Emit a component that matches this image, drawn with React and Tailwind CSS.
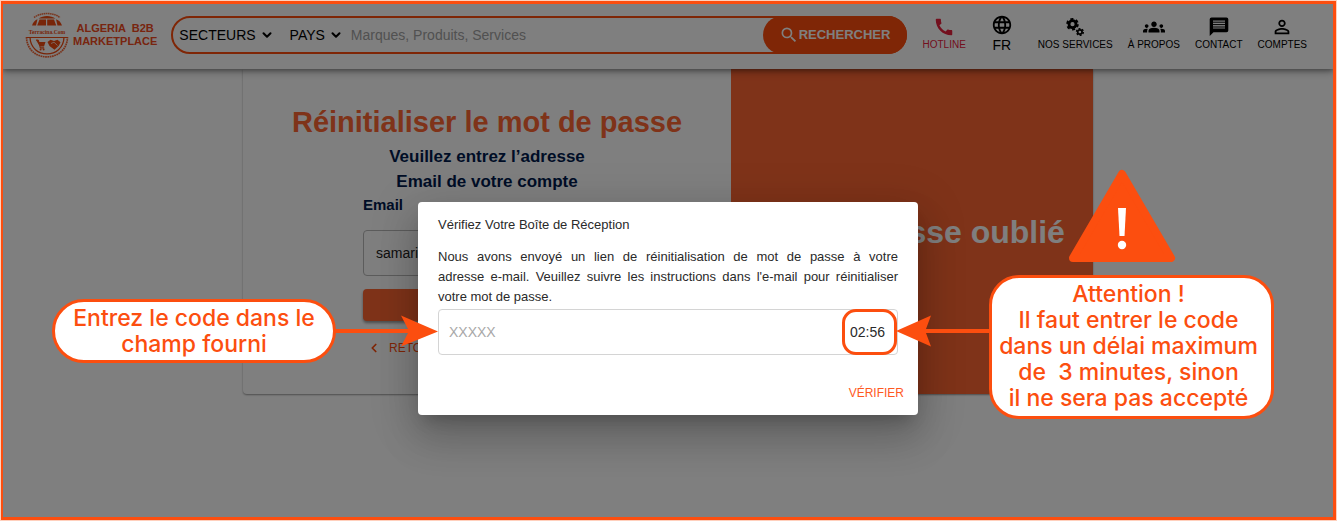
import React from "react";
import { ChevronDown, ChevronLeft } from "lucide-react";
import { MdCall, MdLanguage, MdGroups, MdPermIdentity, MdSearch } from "react-icons/md";

function Logo() {
  return (
    <svg viewBox="0 0 44 46" className="h-[46px] w-11 shrink-0 text-[#f04a10]" fill="currentColor" aria-hidden="true">
      <path d="M9 5.5C16 .2 28 .2 35 5.5" fill="none" stroke="currentColor" strokeWidth="1.6" strokeDasharray="1.6 .5" opacity=".8" />
      <path d="M7 13.6C8 10.2 10.2 7.800 12.500 7.200L11 13.600ZM12.200 13.600L14.500 7.500H21V13.600ZM22.200 13.600V7.500H29L31.200 13.600ZM32.500 13.600L31 7.200C34 8 36 10.500 37 13.600Z" />
      <path d="M13.500 6.600C18 3.200 26 3.200 30.500 6.600Z" />
      <text x="22" y="21.500" textAnchor="middle" fontFamily="Liberation Serif, serif" fontWeight="700" fontSize="5.600">Terracina.Com</text>
      <path d="M1.500 25.500H42.500" stroke="currentColor" strokeWidth="1.200" />
      <path d="M5 25C5.500 47.500 38.500 47.500 39 25" fill="none" stroke="currentColor" strokeWidth="1.300" />
      <path d="M1.500 25C2 51.500 42 51.500 42.500 25" fill="none" stroke="currentColor" strokeWidth="1.700" strokeDasharray="1.700 .6" opacity=".85" />
      <path d="M11 28H13.500L14.200 30H20.500L19 34.500H14.800ZM14.800 35.500H19V36.300H14.800Z" />
      <path d="M11 28H13.300L15.300 36H19.300" fill="none" stroke="currentColor" strokeWidth=".9" />
      <circle cx="15.600" cy="37.600" r="1" />
      <circle cx="18.600" cy="37.600" r="1" />
      <path d="M22.500 30L25.500 27.800L29 28.900L32.500 27.800L35.500 30.200L33.800 33.800L29.500 37.800L24.500 34Z" />
      <path d="M26 31.500L29 30.200L32.500 33.500" fill="none" stroke="white" strokeWidth=".7" />
    </svg>
  );
}

function GearsIcon({ className }) {
  return (
    <svg viewBox="0 0 22 22" className={className} fill="none" stroke="currentColor" aria-hidden="true">
      <circle cx="8.500" cy="8.200" r="3.500" strokeWidth="2.800" />
      <circle cx="8.500" cy="8.200" r="5.300" strokeWidth="2" strokeDasharray="3 2.550" />
      <circle cx="15.900" cy="16" r="2.200" strokeWidth="1.700" />
      <circle cx="15.900" cy="16" r="3.400" strokeWidth="1.400" strokeDasharray="1.900 1.660" />
    </svg>
  );
}

function MessageIcon({ className }) {
  return (
    <svg viewBox="0 0 22 22" className={className} aria-hidden="true">
      <path
        fillRule="evenodd"
        fill="currentColor"
        d="M3.500 1.500H18.500Q20.300 1.500 20.300 3.300V14.500Q20.300 16.300 18.500 16.300H5.500L1.700 20V3.300Q1.700 1.500 3.500 1.500ZM5 4.600V12.600H17V4.600Z"
      />
      <path d="M5 6.200H17M5 8.600H17M5 11H17" stroke="currentColor" strokeWidth="1" />
    </svg>
  );
}

function NavItem({ icon: Icon, label, className = "text-black" }) {
  return (
    <a href="#" className={`flex flex-col items-center whitespace-nowrap text-[10px] leading-[14px] ${className}`}>
      <Icon className="size-[22px]" />
      {label}
    </a>
  );
}

function Header() {
  return (
    <header className="relative flex h-[65px] items-center bg-white pr-[26px] pb-[3px] pl-[22px] shadow-[0_2px_4px_rgba(0,0,0,0.3),0_4px_8px_rgba(0,0,0,0.2)]">
      <a href="#" className="flex items-center gap-1">
        <Logo />
        <span className="text-center text-[11px] leading-[13px] font-bold whitespace-pre text-[#f04a20]">
          {"ALGERIA  B2B\nMARKETPLACE"}
        </span>
      </a>
      <form className="ml-3.5 flex h-[38px] min-w-0 flex-1 items-center rounded-full border-2 border-[#ff4c0c] pl-1.5" onSubmit={(e) => e.preventDefault()}>
        <button type="button" className="flex items-center gap-1 text-sm">
          SECTEURS
          <ChevronDown size={14} strokeWidth={3.5} />
        </button>
        <button type="button" className="ml-4 flex items-center gap-1 text-sm">
          PAYS
          <ChevronDown size={14} strokeWidth={3.5} />
        </button>
        <input
          aria-label="Recherche"
          placeholder="Marques, Produits, Services"
          className="ml-2 min-w-0 flex-1 text-sm outline-none placeholder:text-[#a2a2a2]"
        />
        <button className="-mr-0.5 flex h-[38px] w-36 items-center justify-center rounded-full bg-[#ff4c0c] text-[13px] font-bold text-white">
          <MdSearch className="size-5" />
          RECHERCHER
        </button>
      </form>
      <nav className="ml-4 flex items-center gap-[15px] pb-0.5">
        <NavItem icon={MdCall} label="HOTLINE" className="text-[#e6203c]" />
        <button type="button" className="flex flex-col items-center px-2.5 text-sm leading-[18px]">
          <MdLanguage className="size-[22px]" />
          FR
        </button>
        <NavItem icon={GearsIcon} label="NOS SERVICES" />
        <NavItem icon={MdGroups} label="À PROPOS" />
        <NavItem icon={MessageIcon} label="CONTACT" />
        <NavItem icon={MdPermIdentity} label="COMPTES" />
      </nav>
    </header>
  );
}

function ResetCard() {
  return (
    <main className="mx-auto grid w-full max-w-[850px] grid-cols-[488fr_362fr] overflow-hidden rounded-b bg-white shadow-[0_1px_2px_rgba(0,0,0,0.4)]">
      <section className="flex flex-col items-center pt-[35px] pb-9">
        <h1 className="text-[29px] leading-9 font-bold text-[#ff6633]">Réinitialiser le mot de passe</h1>
        <p className="mt-1 text-center text-[17px] leading-[25px] font-bold text-[#001a4d]">
          Veuillez entrez l’adresse
          <br />
          Email de votre compte
        </p>
        <form className="flex w-[248px] flex-col" onSubmit={(e) => e.preventDefault()}>
          <label htmlFor="email" className="text-[15px] leading-[22px] font-bold text-[#001a4d]">
            Email
          </label>
          <input
            id="email"
            type="email"
            defaultValue="samarin"
            className="mt-3.5 h-[46px] rounded border border-[#b8b8b8] px-3 text-sm text-[#222]"
          />
          <button
            aria-label="Envoyer"
            className="mt-[13px] h-8 rounded bg-[#ff6633] shadow-[0_2px_3px_rgba(0,0,0,0.4)]"
          />
          <a href="#" className="mt-[17px] flex items-center gap-2 pl-1 text-xs leading-5 text-[#ff4c0c]">
            <ChevronLeft size={14} strokeWidth={3} />
            RETOUR
          </a>
        </form>
      </section>
      <section className="flex items-center justify-center bg-[#ff6633]">
        <h2 className="text-[32px] font-bold whitespace-nowrap text-white">Mot de passe oublié</h2>
      </section>
    </main>
  );
}

function Callout({ className, children }) {
  return (
    <p
      className={`absolute border-[3px] border-[#fc4e0f] bg-white text-center font-[Inter,sans-serif] text-[23px] leading-[26px] font-medium whitespace-pre text-[#fc4e0f] ${className}`}
    >
      {children}
    </p>
  );
}

function Annotations() {
  return (
    <>
      <svg viewBox="0 0 104 32" className="absolute top-[113px] right-[480px] h-8 w-[104px]" fill="#fc4e0f" aria-hidden="true">
        <path d="M0 14H74L67 .5L104 16.500L67 31.500L74 18H0Z" />
      </svg>
      <Callout className="top-[97px] right-[582px] w-[284px] rounded-[32px] py-[3px]">
        {"Entrez le code dans le\nchamp fourni"}
      </Callout>
      <svg viewBox="0 0 95 32" className="absolute top-[113px] left-[478px] h-8 w-[95px]" fill="#fc4e0f" aria-hidden="true">
        <path d="M95 14H30L35 .5L0 16L35 31.500L30 18H95Z" />
      </svg>
      <svg viewBox="0 0 108 94" className="absolute -top-[33px] left-[650px] h-[94px] w-[108px]" aria-hidden="true">
        <path d="M54 5L103 89H5Z" fill="#fc4e0f" stroke="#fc4e0f" strokeWidth="8" strokeLinejoin="round" />
        <path d="M50 39H58L56.500 67H51.500Z" fill="white" />
        <circle cx="54" cy="76" r="4.200" fill="white" />
      </svg>
      <Callout className="top-[73px] left-[571px] w-[285px] rounded-[30px] pt-[3px] pr-1.5 pb-[5px]">
        {"Attention !\nIl faut entrer le code\ndans un délai maximum\nde  3 minutes, sinon\nil ne sera pas accepté"}
      </Callout>
    </>
  );
}

function VerifyDialog() {
  return (
    <div className="absolute inset-0 flex items-start justify-center bg-black/50 pt-[198px]">
      <div className="relative">
        <div
          role="dialog"
          aria-labelledby="verify-title"
          className="flex w-[500px] flex-col rounded bg-white px-5 pt-3 pb-2.5 text-[13px] text-[#2a2a2a] shadow-[0_11px_15px_-7px_rgba(0,0,0,0.2),0_24px_38px_3px_rgba(0,0,0,0.14),0_9px_46px_8px_rgba(0,0,0,0.12)]"
        >
          <h2 id="verify-title" className="leading-[21px]">
            Vérifiez Votre Boîte de Réception
          </h2>
          <p className="mt-3 leading-5">
            <span className="block text-justify [text-align-last:justify]">
              Nous avons envoyé un lien de réinitialisation de mot de passe à votre
            </span>
            <span className="block text-justify [text-align-last:justify]">
              adresse e-mail. Veuillez suivre les instructions dans l'e-mail pour réinitialiser
            </span>
            <span className="block">votre mot de passe.</span>
          </p>
          <div className="mt-0.5 flex h-[46px] items-center rounded-sm border border-[#d4d4d4] pl-2.5">
            <input
              aria-label="Code de vérification"
              placeholder="XXXXX"
              className="min-w-0 flex-1 text-sm outline-none placeholder:text-[#a8a8a8]"
            />
            <time className="flex h-[46px] w-[55px] items-center justify-center rounded-[14px] border-[3px] border-[#fc4e0f] pr-1 text-sm">
              02:56
            </time>
          </div>
          <button className="mt-[26px] -mr-1.5 self-end text-xs leading-6 text-[#ff5a1f]">VÉRIFIER</button>
        </div>
        <Annotations />
      </div>
    </div>
  );
}

export default function App() {
  return (
    <div className="flex min-h-screen bg-[#ffd0bd] p-px font-['Liberation_Sans',Arial,sans-serif] text-black">
      <div className="relative flex-1 overflow-hidden border-x-2 border-t-[3px] border-r-[3px] border-b-[3px] border-[#fc4e0f] bg-white">
        <Header />
        <ResetCard />
        <VerifyDialog />
      </div>
    </div>
  );
}
